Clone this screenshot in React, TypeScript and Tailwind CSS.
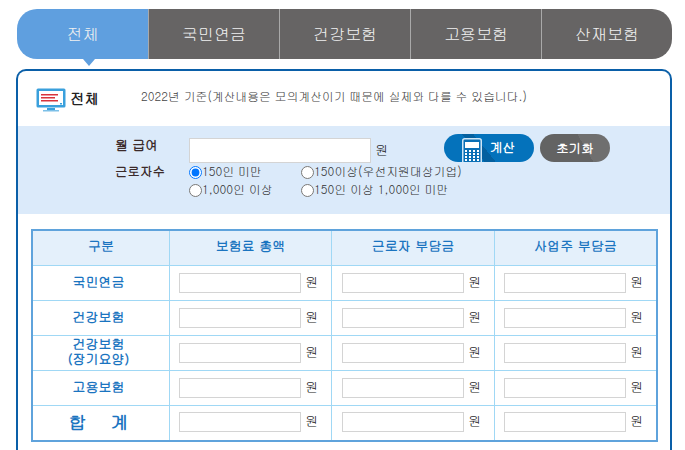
const fontStack = "font-['Gulim','Noto_Sans_CJK_KR','Noto_Sans',sans-serif]";

const tabs = ["전체", "국민연금", "건강보험", "고용보험", "산재보험"];
const rows = ["국민연금", "건강보험", "건강보험\n(장기요양)", "고용보험"];

function MonitorIcon() {
  return (
    <svg width="30" height="24" viewBox="0 0 30 24" className="shrink-0">
      <rect x="0.5" y="0.5" width="29" height="19" rx="1.5" fill="#3aa0dc" />
      <rect x="3" y="3" width="24" height="14" fill="#ffffff" />
      <rect x="5" y="6" width="17" height="1.5" fill="#d8343c" />
      <rect x="5" y="9" width="14" height="1.5" fill="#d8343c" />
      <rect x="5" y="12" width="17" height="1.5" fill="#d8343c" />
      <rect x="24" y="15" width="2" height="1.5" fill="#3aa0dc" />
      <rect x="11" y="20" width="8" height="2" fill="#3aa0dc" />
      <rect x="7" y="22" width="16" height="1.5" fill="#7cc0e8" />
    </svg>
  );
}

function CalcIcon() {
  return (
    <svg width="20" height="24" viewBox="0 0 20 24" className="shrink-0">
      <rect x="0.75" y="0.75" width="18.5" height="30" rx="2" fill="#0a6fb5" stroke="#cfe6f6" strokeWidth="1.5" />
      <rect x="3" y="4" width="14" height="6" fill="#ffffff" />
      {[12, 15, 18, 21].map((y) =>
        [3, 7, 11, 15].map((x) => <rect key={`${x}-${y}`} x={x} y={y} width="2" height="2" fill="#ffffff" />),
      )}
    </svg>
  );
}

function Won({ className }: { className?: string }) {
  return <span className={`text-[13px] text-[#222] ${className ?? ""}`}>원</span>;
}

function Radio({ label, checked }: { label: string; checked?: boolean }) {
  return (
    <label className="flex items-center h-[18px] text-[11.85px] text-[#333] whitespace-nowrap">
      <input type="radio" name="workers" defaultChecked={checked} className="w-[13px] h-[13px] mr-0 accent-[#0075ff]" />
      <span className="-mt-[1px]">{label}</span>
    </label>
  );
}

function AmountField() {
  return (
    <div className="flex items-center gap-[4px]">
      <input type="text" className="w-[122px] h-[20px] bg-white border border-[#d4d4d4]" />
      <Won className="-mt-[2px]" />
    </div>
  );
}

export default function App() {
  return (
    <div className={`w-[685px] h-[450px] overflow-hidden bg-white pt-[9px] pl-[17px] ${fontStack}`}>
      {/* 상단 탭 */}
      <div className="relative flex w-[655px] h-[50px]">
        {tabs.map((tab, i) => (
          <div
            key={tab}
            className={`flex items-center justify-center h-full text-[16px] text-[#f0f0f0] ${
              i === 0
                ? "w-[131px] bg-[#5f9fdf] rounded-l-[20px]"
                : "w-[131px] bg-[#666464] border-l border-[#a9a9a9]"
            } ${i === 4 ? "rounded-r-[20px]" : ""}`}
          >
            {tab}
          </div>
        ))}
        <div className="absolute left-[66px] top-[50px] w-0 h-0 border-x-[6px] border-x-transparent border-t-[7px] border-t-[#5f9fdf]" />
      </div>

      {/* 본문 패널 */}
      <div className="mt-[10px] -ml-px w-[656px] h-[400px] bg-white border-2 border-b-0 border-[#0a5fa8] rounded-t-[10px]">
        <div className="flex items-center h-[55px] pl-[18px] pt-[3px]">
          <MonitorIcon />
          <span className="ml-[4px] -mt-[3px] text-[14.5px] font-bold text-[#222]">전체</span>
          <span className="ml-[42px] -mt-[7px] text-[11.8px] text-[#444]">
            2022년 기준(계산내용은 모의계산이기 때문에 실제와 다를 수 있습니다.)
          </span>
        </div>

        {/* 입력 영역 */}
        <div className="h-[88px] bg-[#dbeafa] pl-[97px] pt-[8px]">
          <div className="flex h-[30px]">
            <span className="w-[74px] pt-[1px] text-[13px] font-bold text-[#3b2a2a] whitespace-pre">월 급여</span>
            <input type="text" className="mt-[4px] w-[182px] h-[25px] bg-white border border-[#d4d4d4]" />
            <Won className="ml-[4px] mt-[6px]" />
            <button className="ml-[56px] flex items-end w-[90px] h-[28px] overflow-hidden rounded-full bg-[linear-gradient(51deg,#0472bb_36%,#04609f_36%,#04609f_46%,#0472bb_46%)] pl-[18px] text-white">
              <CalcIcon />
              <span className="ml-[8px] self-center -mt-[1px] text-[12.5px] font-bold">계산</span>
            </button>
            <button className="ml-[6px] w-[70px] h-[28px] rounded-full bg-[linear-gradient(60deg,#636363_62%,#6f6f6f_62%)] text-[12.5px] font-bold text-white">
              초기화
            </button>
          </div>
          <div className="flex -mt-[1px]">
            <span className="w-[74px] -mt-[1px] text-[12.5px] font-bold text-[#3b2a2a]">근로자수</span>
            <div className="grid grid-cols-[112px_auto] auto-rows-[18px] w-fit">
              <Radio label="150인 미만" checked />
              <Radio label="150이상(우선지원대상기업)" />
              <Radio label="1,000인 이상" />
              <Radio label="150인 이상 1,000인 미만" />
            </div>
          </div>
        </div>

        {/* 결과 표 */}
        <table className="mt-[15px] ml-[13px] w-[627px] table-fixed border-separate border-spacing-0 border-2 border-[#5fa3dc]">
          <colgroup>
            <col className="w-[137px]" />
            <col className="w-[162px]" />
            <col className="w-[163px]" />
            <col />
          </colgroup>
          <thead>
            <tr className="bg-[#e4f0fb] text-[13px] font-bold text-[#1a74c0]">
              {["구분", "보험료 총액", "근로자 부담금", "사업주 부담금"].map((h, i) => (
                <th key={h} className={`h-[35px] pb-[5px] border-b border-[#a0d8f5] ${i < 3 ? "border-r" : ""}`}>
                  {h}
                </th>
              ))}
            </tr>
          </thead>
          <tbody>
            {rows.map((row) => (
              <tr key={row}>
                <td className="h-[35px] pb-[4px] pr-[5px] border-b border-r border-[#a0d8f5] text-center text-[13px] leading-[15px] font-bold text-[#1a74c0] whitespace-pre-line">
                  {row}
                </td>
                <td className="border-b border-r border-[#a0d8f5] pl-[9px]">
                  <AmountField />
                </td>
                <td className="border-b border-r border-[#a0d8f5] pl-[10px]">
                  <AmountField />
                </td>
                <td className="border-b border-[#a0d8f5] pl-[9px]">
                  <AmountField />
                </td>
              </tr>
            ))}
            <tr>
              <td className="h-[34px] pb-[2px] pr-[5px] border-r border-[#a0d8f5] text-center text-[18px] leading-[24px] font-bold text-[#1a74c0] whitespace-pre">
                합    계
              </td>
              <td className="pb-[2px] border-r border-[#a0d8f5] pl-[9px]">
                <AmountField />
              </td>
              <td className="pb-[2px] border-r border-[#a0d8f5] pl-[10px]">
                <AmountField />
              </td>
              <td className="pb-[2px] pl-[9px]">
                <AmountField />
              </td>
            </tr>
          </tbody>
        </table>
      </div>
    </div>
  );
}
